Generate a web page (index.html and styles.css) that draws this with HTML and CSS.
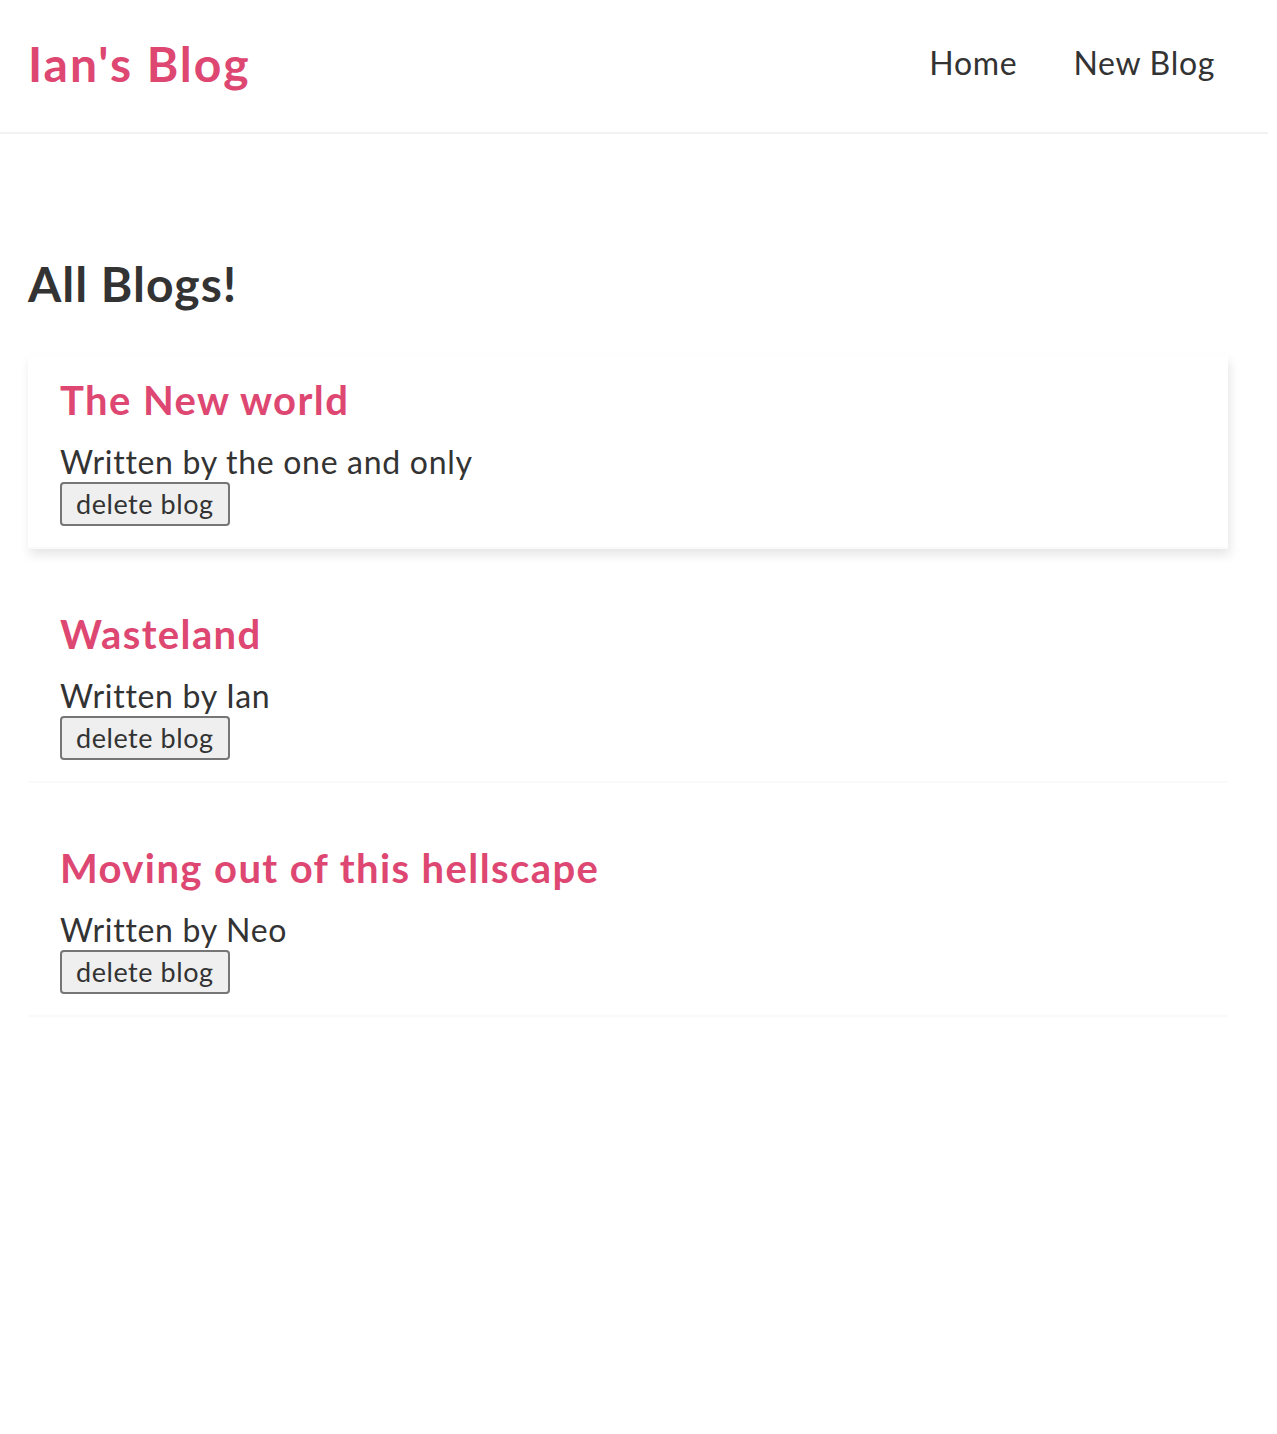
FILE: index.html
```html
<!DOCTYPE html>
<html lang="en">
<head>
<meta charset="utf-8">
<title>Ian's Blog</title>
<link rel="stylesheet" href="styles.css">
</head>
<body>
<div class="app">
  <nav class="navbar">
    <h1 class="logo">Ian's Blog</h1>
    <div class="links">
      <a href="#" class="link">Home</a>
      <a href="#" class="link">New Blog</a>
    </div>
  </nav>
  <main class="content">
    <h2 class="page-title">All Blogs!</h2>
    <div class="blog-list">
      <div class="blog-preview is-hover">
        <h2 class="blog-title">The New world</h2>
        <p class="blog-author">Written by the one and only</p>
        <button class="delete-btn">delete blog</button>
      </div>
      <div class="blog-preview">
        <h2 class="blog-title">Wasteland</h2>
        <p class="blog-author">Written by Ian</p>
        <button class="delete-btn">delete blog</button>
      </div>
      <div class="blog-preview">
        <h2 class="blog-title">Moving out of this hellscape</h2>
        <p class="blog-author">Written by Neo</p>
        <button class="delete-btn">delete blog</button>
      </div>
    </div>
  </main>
</div>
</body>
</html>
```

FILE: styles.css
```css
* {
  margin: 0;
  box-sizing: border-box;
}

body {
  margin: 0;
  background: #fff;
  font-family: "Lato", "Open Sans", sans-serif;
  color: #333;
}

.app {
  width: 1268px;
}

.navbar {
  display: flex;
  align-items: center;
  height: 134px;
  padding: 0 28px 4px;
  border-bottom: 2px solid #f2f2f2;
}

.logo {
  font-size: 48px;
  line-height: 60px;
  font-weight: 700;
  letter-spacing: 2px;
  color: #dd4771;
}

.links {
  margin-left: auto;
  display: flex;
  margin-right: 13px;
  padding-bottom: 2px;
}

.link {
  margin-left: 32px;
  padding: 12px;
  font-size: 32px;
  line-height: 40px;
  letter-spacing: 0.7px;
  color: #333;
  text-decoration: none;
}

.content {
  width: 1200px;
  margin: 120px 0 0 28px;
}

.page-title {
  font-size: 48px;
  line-height: 60px;
  font-weight: 700;
  letter-spacing: 1px;
  color: #333;
  margin-bottom: 41px;
}

.blog-preview {
  padding: 20px 32px 21px;
  margin: 0 0 40px;
  border-bottom: 2px solid #fafafa;
  display: flex;
  flex-direction: column;
  align-items: flex-start;
}

.blog-preview.is-hover {
  box-shadow: 2px 6px 10px rgba(0, 0, 0, 0.1);
}

.blog-title {
  font-size: 40px;
  line-height: 50px;
  font-weight: 700;
  letter-spacing: 1.4px;
  color: #dd4771;
  margin-bottom: 16px;
}

.blog-author {
  font-size: 32px;
  line-height: 41px;
  letter-spacing: 0.7px;
}

.delete-btn {
  font-family: inherit;
  font-size: 27px;
  line-height: 36px;
  letter-spacing: 0.55px;
  height: 44px;
  padding: 0 14px;
  color: #333;
  background: #efefef;
  border: 2px solid #767676;
  border-radius: 4px;
}
```
